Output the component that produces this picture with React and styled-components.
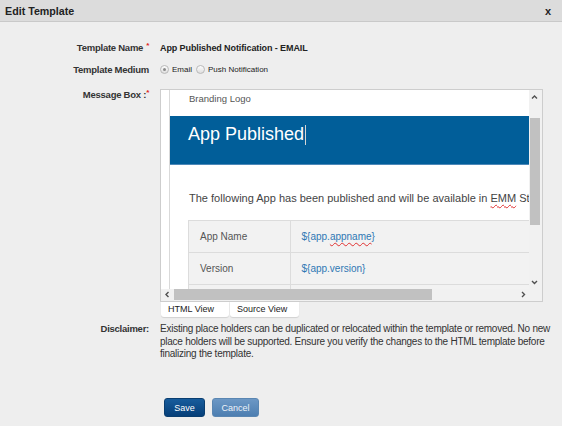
import React from 'react';
import styled, { createGlobalStyle } from 'styled-components';

const GlobalStyle = createGlobalStyle`
  body {
    margin: 0;
    background: #eeeeee;
    font-family: "Liberation Sans", Arial, sans-serif;
  }
`;

const Page = styled.div`
  width: 562px;
  height: 426px;
  overflow: hidden;
  background: #eeeeee;
`;

const Header = styled.div`
  height: 21px;
  display: flex;
  align-items: center;
  justify-content: space-between;
  padding: 0 11px 0 5px;
  background: #dcdcdc;
  border-bottom: 1px solid #c9c9c9;
`;

const Title = styled.div`
  font-size: 10.7px;
  font-weight: bold;
  color: #222;
`;

const Close = styled.div`
  font-size: 11px;
  font-weight: bold;
  color: #222;
`;

const Form = styled.div`
  display: flex;
  flex-direction: column;
  padding-top: 15px;
`;

const FieldRow = styled.div`
  display: flex;
  align-items: ${p => (p.$top ? 'flex-start' : 'center')};
  min-height: ${p => p.$h || 0}px;
  margin-top: ${p => p.$mt || 0}px;
`;

const Label = styled.div`
  width: 149px;
  flex-shrink: 0;
  margin-right: 11px;
  text-align: right;
  font-size: 9.5px;
  font-weight: bold;
  letter-spacing: -0.25px;
  line-height: ${p => p.$lh || 11}px;
  padding-top: ${p => p.$pt || 0}px;
  color: #333;
`;

const Req = styled.span`
  color: #e02222;
  font-size: 8px;
  vertical-align: top;
  margin-left: ${p => p.$ml ?? 3}px;
  line-height: 8px;
`;

const Value = styled.div`
  font-size: 9px;
  font-weight: bold;
  letter-spacing: -0.1px;
  color: #222;
`;

const RadioGroup = styled.div`
  display: flex;
  align-items: center;
`;

const Radio = styled.span`
  width: 9px;
  height: 9px;
  box-sizing: border-box;
  border-radius: 50%;
  border: 1px solid #b9b9b9;
  background: linear-gradient(#fdfdfd, #dedede);
  display: flex;
  align-items: center;
  justify-content: center;

  &::after {
    content: '';
    width: 3px;
    height: 3px;
    border-radius: 50%;
    background: ${p => (p.$checked ? '#8a8a8a' : 'transparent')};
  }
`;

const RadioText = styled.span`
  font-size: 8px;
  color: #222;
  margin: 0 4px 0 3px;
`;

const EditorColumn = styled.div`
  display: flex;
  flex-direction: column;
`;

const EditorFrame = styled.div`
  width: 383px;
  height: 213px;
  box-sizing: border-box;
  border: 1px solid #cdcdcd;
  background: #fff;
  display: grid;
  grid-template-columns: 1fr 13px;
  grid-template-rows: 1fr 12px;
`;

const Viewport = styled.div`
  overflow: hidden;
  padding-left: 8px;
`;

const Doc = styled.div`
  width: 440px;
  height: 100%;
  border-left: 1px solid #d9d9d9;
`;

const Branding = styled.div`
  height: 26px;
  box-sizing: border-box;
  padding: 2px 0 0 19px;
  font-size: 9.5px;
  line-height: 14px;
  color: #555;
`;

const Banner = styled.div`
  height: 49px;
  box-sizing: border-box;
  padding: 7px 0 0 18px;
  background: #015e99;
  border-bottom: 1px solid #4d88b8;
  color: #fff;
  font-size: 18px;
  line-height: 22px;
  white-space: nowrap;
`;

const Caret = styled.span`
  display: inline-block;
  width: 1px;
  height: 20px;
  margin-left: 1px;
  vertical-align: middle;
  background: #d6d6d6;
`;

const Sentence = styled.div`
  margin-top: 26px;
  padding-left: 19px;
  font-size: 11px;
  line-height: 14px;
  color: #444;
  white-space: nowrap;
`;

const Spell = styled.span`
  text-decoration: underline wavy #e03030;
  text-decoration-thickness: 1px;
  text-underline-offset: 2px;
`;

const InfoTable = styled.table`
  margin: 15px 0 0 18px;
  border-collapse: collapse;
  background: #f2f2f2;
`;

const Cell = styled.td`
  height: 31px;
  padding: 0 11px;
  border: 1px solid #dcdcdc;
  font-size: 10px;
  white-space: nowrap;
  width: ${p => p.$w}px;
  color: ${p => (p.$link ? '#2f78b4' : '#555')};
`;

const VScroll = styled.div`
  background: #f1f1f1;
  display: flex;
  flex-direction: column;
`;

const HScroll = styled.div`
  background: #f1f1f1;
  display: flex;
`;

const Corner = styled.div`
  background: #f1f1f1;
`;

const ArrowBtn = styled.div`
  flex-shrink: 0;
  width: ${p => p.$w}px;
  height: ${p => p.$h}px;
  display: flex;
  align-items: center;
  justify-content: center;
`;

const Rail = styled.div`
  flex: 1;
  display: flex;
  flex-direction: ${p => (p.$vertical ? 'column' : 'row')};
`;

const Thumb = styled.div`
  background: #c1c1c1;
  ${p =>
    p.$vertical
      ? `margin: ${p.$offset}px 2px 0 1px; height: ${p.$size}px;`
      : `margin: 0 0 0 ${p.$offset}px; width: ${p.$size}px; height: 11px;`}
`;

const Tabs = styled.div`
  display: flex;
  gap: 1px;
  margin-left: 1px;
`;

const Tab = styled.div`
  width: ${p => p.$w}px;
  height: 15px;
  box-sizing: border-box;
  padding-left: 7px;
  background: #fff;
  border-radius: 0 0 3px 3px;
  box-shadow: 0 1px 1px rgba(0, 0, 0, 0.12);
  font-size: 9px;
  line-height: 15px;
  color: #222;
`;

const Disclaimer = styled.div`
  width: 394px;
  font-size: 10px;
  letter-spacing: -0.25px;
  line-height: 12.7px;
  color: #333;
`;

const ButtonBar = styled.div`
  display: flex;
  gap: 7px;
  padding-left: 164px;
  margin-top: 37px;
`;

const Button = styled.button`
  height: 19px;
  width: ${p => p.$w}px;
  padding: 0;
  border-radius: 3px;
  font-family: inherit;
  font-size: 9px;
  cursor: pointer;
  color: ${p => (p.$primary ? '#fff' : '#eef3f9')};
  border: 1px solid ${p => (p.$primary ? '#0a3e70' : '#5a86b2')};
  background: ${p =>
    p.$primary
      ? 'linear-gradient(#175c9c, #063f79)'
      : 'linear-gradient(#6c98c5, #4d7eb1)'};
`;

const Chevron = ({ dir }) => {
  const paths = {
    up: 'M1 4.5 L3.5 2 L6 4.5',
    down: 'M1 2 L3.5 4.5 L6 2',
    left: 'M4.5 1 L2 3.5 L4.5 6',
    right: 'M2 1 L4.5 3.5 L2 6',
  };
  return (
    <svg width="7" height="7" viewBox="0 0 7 7">
      <path d={paths[dir]} fill="none" stroke="#505050" strokeWidth="1.4" />
    </svg>
  );
};

export default function App() {
  return (
    <Page>
      <GlobalStyle />
      <Header>
        <Title>Edit Template</Title>
        <Close>x</Close>
      </Header>

      <Form>
        <FieldRow $h={21}>
          <Label>
            Template Name<Req>*</Req>
          </Label>
          <Value>App Published Notification - EMAIL</Value>
        </FieldRow>

        <FieldRow $h={22}>
          <Label>Template Medium</Label>
          <RadioGroup>
            <Radio $checked />
            <RadioText>Email</RadioText>
            <Radio />
            <RadioText>Push Notification</RadioText>
          </RadioGroup>
        </FieldRow>

        <FieldRow $top $mt={9}>
          <Label $pt={0}>
            Message Box :<Req $ml={0}>*</Req>
          </Label>
          <EditorColumn>
            <EditorFrame>
              <Viewport>
                <Doc>
                  <Branding>Branding Logo</Branding>
                  <Banner>
                    App Published
                    <Caret />
                  </Banner>
                  <Sentence>
                    The following App has been published and will be available in{' '}
                    <Spell>EMM</Spell> Store
                  </Sentence>
                  <InfoTable>
                    <tbody>
                      <tr>
                        <Cell $w={79}>App Name</Cell>
                        <Cell $w={300} $link>
                          ${'{'}app.<Spell>appname</Spell>
                          {'}'}
                        </Cell>
                      </tr>
                      <tr>
                        <Cell $w={79}>Version</Cell>
                        <Cell $w={300} $link>
                          {'${app.version}'}
                        </Cell>
                      </tr>
                      <tr>
                        <Cell $w={79} />
                        <Cell $w={300} />
                      </tr>
                    </tbody>
                  </InfoTable>
                </Doc>
              </Viewport>

              <VScroll>
                <ArrowBtn $w={11} $h={14}>
                  <Chevron dir="up" />
                </ArrowBtn>
                <Rail $vertical>
                  <Thumb $vertical $offset={14} $size={107} />
                </Rail>
                <ArrowBtn $w={11} $h={14}>
                  <Chevron dir="down" />
                </ArrowBtn>
              </VScroll>

              <HScroll>
                <ArrowBtn $w={12} $h={11}>
                  <Chevron dir="left" />
                </ArrowBtn>
                <Rail>
                  <Thumb $offset={1} $size={258} />
                </Rail>
                <ArrowBtn $w={12} $h={11}>
                  <Chevron dir="right" />
                </ArrowBtn>
              </HScroll>
              <Corner />
            </EditorFrame>

            <Tabs>
              <Tab $w={68}>HTML View</Tab>
              <Tab $w={69}>Source View</Tab>
            </Tabs>
          </EditorColumn>
        </FieldRow>

        <FieldRow $top $mt={6}>
          <Label $lh={12.7}>Disclaimer:</Label>
          <Disclaimer>
            Existing place holders can be duplicated or relocated within the template or
            removed. No new place holders will be supported. Ensure you verify the changes
            to the HTML template before finalizing the template.
          </Disclaimer>
        </FieldRow>

        <ButtonBar>
          <Button $primary $w={41}>Save</Button>
          <Button $w={47}>Cancel</Button>
        </ButtonBar>
      </Form>
    </Page>
  );
}
